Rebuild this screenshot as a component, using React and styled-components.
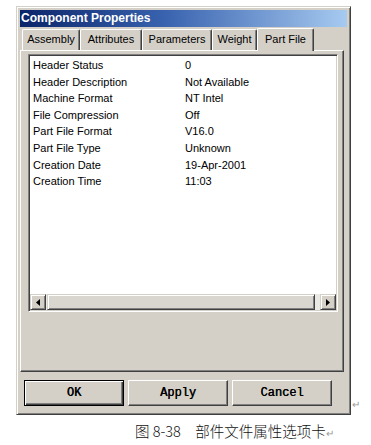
import React from 'react'
import styled, { createGlobalStyle } from 'styled-components'

const GlobalStyle = createGlobalStyle`
  body {
    margin: 0;
    background: #fff;
    font-family: 'Liberation Sans', Arial, sans-serif;
  }
`

const Page = styled.div`
  width: 371px;
  height: 445px;
  overflow: hidden;
`

const DialogRow = styled.div`
  display: flex;
  align-items: flex-end;
  padding: 6px 0 0 16px;
`

const Dialog = styled.div`
  width: 335px;
  box-sizing: border-box;
  background: #d4d0c8;
  border: 1px solid;
  border-color: #d4d0c8 #404040 #404040 #d4d0c8;
  box-shadow: inset 1px 1px #fff, inset -1px -1px #808080;
  padding: 3px;
`

const TitleBar = styled.div`
  height: 17px;
  line-height: 17px;
  padding-left: 1px;
  background: linear-gradient(to right, #0a246a 0%, #3a64b0 45%, #a6caf0 100%);
  color: #fff;
  font-size: 12px;
  font-weight: bold;
`

const Body = styled.div`
  padding: 1px 0 5px 0;
`

const TabStrip = styled.div`
  display: flex;
  height: 22px;
  padding-left: 2px;
  align-items: flex-end;
`

const Tab = styled.div`
  width: ${p => p.$w}px;
  height: ${p => (p.$active ? 23 : 21)}px;
  box-sizing: border-box;
  margin-bottom: ${p => (p.$active ? -1 : 0)}px;
  position: relative;
  z-index: ${p => (p.$active ? 1 : 0)};
  background: #d4d0c8;
  border-top: 1px solid #fff;
  border-left: 1px solid #fff;
  border-right: 1px solid #404040;
  box-shadow: inset -1px 0 #808080;
  border-radius: 2px 2px 0 0;
  font-size: 11px;
  line-height: ${p => (p.$active ? 20 : 19)}px;
  text-align: center;
  color: #000;
`

const Panel = styled.div`
  width: 324px;
  height: 322px;
  box-sizing: border-box;
  border: 1px solid;
  border-color: #fff #404040 #404040 #fff;
  box-shadow: inset -1px -1px #808080;
  padding: 3px 0 0 7px;
`

const ListBox = styled.div`
  width: 310px;
  height: 258px;
  box-sizing: border-box;
  background: #fff;
  border: 1px solid;
  border-color: #808080 #fff #fff #808080;
  box-shadow: inset 1px 1px #404040, inset -1px -1px #d4d0c8;
  padding: 1px;
  display: flex;
  flex-direction: column;
`

const Rows = styled.div`
  flex: 1;
  padding: 1px 0 0 3px;
`

const Row = styled.div`
  display: grid;
  grid-template-columns: 152px 1fr;
  height: 16.6px;
  line-height: 16.6px;
  font-size: 11px;
  color: #000;
`

const HScroll = styled.div`
  display: flex;
  height: 16px;
  background: #ebe9e4;
`

const ScrollButton = styled.div`
  width: 16px;
  height: 16px;
  box-sizing: border-box;
  background: #d4d0c8;
  border: 1px solid;
  border-color: #d4d0c8 #404040 #404040 #d4d0c8;
  box-shadow: inset 1px 1px #fff, inset -1px -1px #808080;
  display: flex;
  align-items: center;
  justify-content: center;
`

const Thumb = styled.div`
  flex: 1;
  margin: 0 5px 0 1px;
  box-sizing: border-box;
  background: #d8d6cf;
  border: 1px solid;
  border-color: #d4d0c8 #404040 #404040 #d4d0c8;
  box-shadow: inset 1px 1px #fff, inset -1px -1px #808080;
`

const ButtonRow = styled.div`
  display: flex;
  gap: 4px;
  padding: 8px 0 0 4px;
`

const Button = styled.div`
  width: 100px;
  height: 26px;
  box-sizing: border-box;
  background: #d4d0c8;
  border: 1px solid;
  border-color: ${p => (p.$default ? '#000' : '#fff #404040 #404040 #fff')};
  box-shadow: ${p =>
    p.$default
      ? 'inset 1px 1px #fff, inset -1px -1px #404040, inset -2px -2px #808080'
      : 'inset -1px -1px #808080'};
  font-family: 'Liberation Mono', 'Courier New', monospace;
  font-size: 12px;
  color: #000;
  text-shadow: 0.4px 0 #000;
  display: flex;
  align-items: center;
  justify-content: center;
`

const ReturnMark = styled.span`
  font-family: 'Noto Sans CJK SC', sans-serif;
  font-size: 10px;
  line-height: 10px;
  color: #999;
  margin: 0 0 6px 1px;
`

const Caption = styled.div`
  padding: 6px 0 0 135px;
  font-family: 'Noto Sans CJK SC', sans-serif;
  font-size: 14.5px;
  font-weight: 300;
  line-height: 20px;
  color: #111;
`

const CaptionMark = styled.span`
  font-size: 10px;
  color: #999;
`

const tabs = [
  { label: 'Assembly', w: 58 },
  { label: 'Attributes', w: 62 },
  { label: 'Parameters', w: 70 },
  { label: 'Weight', w: 45 },
  { label: 'Part File', w: 57, active: true },
]

const props = [
  ['Header Status', '0'],
  ['Header Description', 'Not Available'],
  ['Machine Format', 'NT Intel'],
  ['File Compression', 'Off'],
  ['Part File Format', 'V16.0'],
  ['Part File Type', 'Unknown'],
  ['Creation Date', '19-Apr-2001'],
  ['Creation Time', '11:03'],
]

const Arrow = ({ dir }) => (
  <svg width="4" height="7" viewBox="0 0 4 7">
    {dir === 'left' ? <path d="M4 0 L0 3.5 L4 7 Z" fill="#000" /> : <path d="M0 0 L4 3.5 L0 7 Z" fill="#000" />}
  </svg>
)

const App = () => {
  return (
    <Page>
      <GlobalStyle />
      <DialogRow>
        <Dialog>
          <TitleBar>Component Properties</TitleBar>
          <Body>
            <TabStrip>
              {tabs.map(t => (
                <Tab key={t.label} $w={t.w} $active={t.active}>
                  {t.label}
                </Tab>
              ))}
            </TabStrip>
            <Panel>
              <ListBox>
                <Rows>
                  {props.map(([k, v]) => (
                    <Row key={k}>
                      <span>{k}</span>
                      <span>{v}</span>
                    </Row>
                  ))}
                </Rows>
                <HScroll>
                  <ScrollButton>
                    <Arrow dir="left" />
                  </ScrollButton>
                  <Thumb />
                  <ScrollButton>
                    <Arrow dir="right" />
                  </ScrollButton>
                </HScroll>
              </ListBox>
            </Panel>
            <ButtonRow>
              <Button $default>OK</Button>
              <Button>Apply</Button>
              <Button>Cancel</Button>
            </ButtonRow>
          </Body>
        </Dialog>
        <ReturnMark>↵</ReturnMark>
      </DialogRow>
      <Caption>
        图 8-38　部件文件属性选项卡<CaptionMark>↵</CaptionMark>
      </Caption>
    </Page>
  )
}

export default App
